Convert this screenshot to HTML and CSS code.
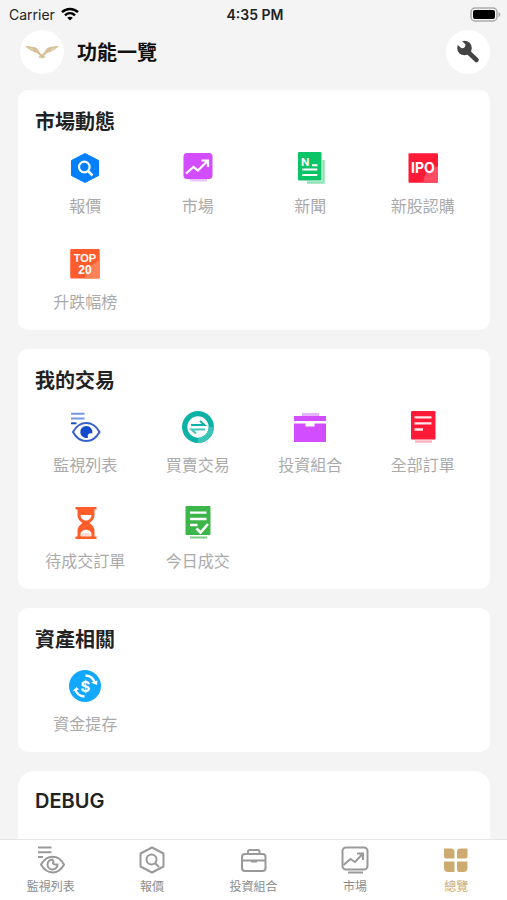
FILE: index.html
```
<!DOCTYPE html>
<html lang="zh-Hant">
<head>
    <meta charset="UTF-8">
    <meta name="viewport" content="width=device-width, initial-scale=1.0">
    <title>功能一覽</title>
    <link rel="stylesheet" href="styles.css">
</head>
<body>
    <div class="status-bar">
        <div class="carrier">
            <span>Carrier</span>
            <svg width="18" height="14" viewBox="0 0 18 14" fill="none" stroke="#000" stroke-width="2.5">
                <path d="M1 5.2C5.5 .8 12.5 .8 17 5.2M4 8.4c2.9-2.8 7.1-2.8 10 0"/>
                <path d="M9 13.6l-2.8-2.9c1.6-1.4 4-1.4 5.6 0z" fill="#000" stroke="none"/>
            </svg>
        </div>
        <div class="time">4:35 PM</div>
        <div class="battery">
            <svg width="31" height="15" viewBox="0 0 31 15">
                <rect x="1" y="1" width="26" height="13" rx="4" fill="#f4f4f4" stroke="#aaa" stroke-width="1.5"/>
                <rect x="3" y="3" width="22" height="9" rx="2"/>
                <path d="M28.5 5c2.4 1 2.4 4 0 5z" fill="#aaa"/>
            </svg>
        </div>
    </div>

    <header class="header">
        <div class="avatar">
            <svg width="34" height="14" viewBox="0 0 34 14">
                <path d="M.5.8c4.500 1.200 8.500.4 11 2.200 1.800 1.300 2.300 3.200 4 5.200L17 9.500l1.500-1.300c1.700-2 2.200-3.900 4-5.200 2.500-1.800 6.500-1 11-2.200-.8 1.800-2 2.700-3.500 3.200-.6 1.300-2 1.900-3.600 2.100-.8 1.200-2.400 1.700-4 1.700-.9 1.300-2 2-3.200 2.500l1.300 2.700-2-.5-1.500 1-1.500-1-2 .5 1.300-2.700c-1.200-.5-2.300-1.200-3.200-2.500-1.600 0-3.200-.5-4-1.700C6 5.900 4.600 5.300 4 4 2.500 3.500 1.300 2.600.5.800z" fill="#d6c096"/>
                <path d="M5 3.500l3 1M26 4.500l3-1" stroke="#fff" stroke-width=".5"/>
            </svg>
        </div>
        <h1>功能一覽</h1>
        <button type="button" class="settings" aria-label="設定">
            <svg width="24" height="24" viewBox="0 0 24 24">
                <path d="M10 10l10.500 10" stroke="#444" stroke-width="4.600" stroke-linecap="round"/>
                <circle cx="8.500" cy="8" r="7.300" fill="#444"/>
                <path d="M1.500-.5L4.500-.5 9.500 4.500C9.500 7 8 8.500 5.500 8.200L0 3.500z" fill="#fff"/>
            </svg>
        </button>
    </header>

    <main class="content">
        <section class="card">
            <h2>市場動態</h2>
            <div class="grid">
                <a href="#" class="item">
                    <svg viewBox="0 0 32 32" fill="none">
                        <path d="M16 1.500L29.500 8.500v15L16 30.500 2.500 23.500v-15z" fill="#0080ff" stroke="#0080ff" stroke-linejoin="round"/>
                        <circle cx="15.300" cy="15" r="5.300" stroke="#fff" stroke-width="2.200"/>
                        <path d="M19 19l4.500 4.500" stroke="#fff" stroke-width="2.500"/>
                    </svg>
                    <span>報價</span>
                </a>
                <a href="#" class="item">
                    <svg viewBox="0 0 32 32" fill="none">
                        <rect x="1.500" y="1" width="29" height="26" rx="3.500" fill="#d24dff"/>
                        <rect x="8" y="27" width="17" height="2.500" fill="#ebc4fb"/>
                        <path d="M4 21.500l7.500-6.500 4.300 3.500L25.500 9M19.500 8.500H26v6.500" stroke="#fff" stroke-width="2.200"/>
                    </svg>
                    <span>市場</span>
                </a>
                <a href="#" class="item">
                    <svg viewBox="0 0 32 32" fill="none">
                        <path d="M13 30.500h16.500V8" stroke="#8fe3b8" stroke-width="2.500"/>
                        <rect x="4" y="0" width="23.500" height="28.500" rx="1" fill="#0cc468"/>
                        <path d="M18 13.300h5.500M8.300 17.500h15M8.300 23h15" stroke="#fff" stroke-width="2"/>
                        <text x="7" y="14" class="glyph" font-size="11">N</text>
                    </svg>
                    <span>新聞</span>
                </a>
                <a href="#" class="item">
                    <svg viewBox="0 0 32 32">
                        <rect x="1.500" y="1.300" width="29.500" height="29.500" rx="1" fill="#ff1a38"/>
                        <path d="M31 14v16.800H16.500c0-10 6-13 14.500-16.800z" fill="#ff4b63"/>
                        <text x="16" y="21" class="glyph" font-size="14" text-anchor="middle">IPO</text>
                    </svg>
                    <span>新股認購</span>
                </a>
                <a href="#" class="item">
                    <svg viewBox="0 0 32 32">
                        <rect x="1.200" y="1" width="29.500" height="29.500" rx="1" fill="#ff5c2e"/>
                        <path d="M30.700 12v18.500H16c0-10 6-13 14.700-18.500z" fill="#ff8059"/>
                        <text x="16" y="14" class="glyph top20" font-size="11" text-anchor="middle">TOP</text>
                        <text x="16" y="26" class="glyph top20" font-size="12" text-anchor="middle">20</text>
                    </svg>
                    <span>升跌幅榜</span>
                </a>
            </div>
        </section>

        <section class="card">
            <h2>我的交易</h2>
            <div class="grid">
                <a href="#" class="item">
                    <svg viewBox="0 0 32 32" fill="none">
                        <path d="M2 2.700h13.500M2 7.500h13.500" stroke="#7895e2" stroke-width="2"/>
                        <path d="M2 12.300h5.500" stroke="#1d4fc8" stroke-width="2"/>
                        <path d="M4 21c6.500-12 20-12 26.500 0-6.500 12-20 12-26.500 0z" fill="#fff" stroke="#3a61c9" stroke-width="2"/>
                        <path d="M17.300 15a6 6 0 1 0 1.800 11.700c-1.200-3 .5-4.600 4.100-4.300A6 6 0 0 0 17.300 15z" fill="#124acb"/>
                    </svg>
                    <span>監視列表</span>
                </a>
                <a href="#" class="item">
                    <svg viewBox="0 0 32 32" fill="none">
                        <circle cx="16" cy="16" r="13.300" stroke="#0cb2a5" stroke-width="5.300"/>
                        <path d="M29.300 16A13.300 13.300 0 0 1 16 29.300" stroke="#3cc4b9" stroke-width="5.300"/>
                        <path d="M9 14h13.500l-4.500-4" stroke="#0cb2a5" stroke-width="2"/>
                        <path d="M23 18.500H9.500l4.500 4" stroke="#45c6bc" stroke-width="2"/>
                    </svg>
                    <span>買賣交易</span>
                </a>
                <a href="#" class="item">
                    <svg viewBox="0 0 32 32">
                        <path d="M8 2h17v3H8z" fill="#e6b2fb"/>
                        <path d="M0 5h32v5H0zM0 12.500h11.500V15.500H20.500V12.500H32V31H0z" fill="#d24dff"/>
                    </svg>
                    <span>投資組合</span>
                </a>
                <a href="#" class="item">
                    <svg viewBox="0 0 32 32" fill="none">
                        <rect x="4" y="0" width="24.500" height="28.500" rx="1" fill="#ff1a38"/>
                        <path d="M7.500 6.300h17M7.500 12.300h17M7.500 18.500h8.500" stroke="#ffe8eb" stroke-width="2.300"/>
                        <path d="M8 30.500h17" stroke="#ffb6c0" stroke-width="2.500"/>
                    </svg>
                    <span>全部訂單</span>
                </a>
                <a href="#" class="item">
                    <svg viewBox="0 0 32 32" fill="none">
                        <path d="M6.500 0h21v2.500h-2V8c0 4-2.500 6-5 8 2.500 2 5 4 5 8v5.500h2V32h-21v-2.500h2V24c0-4 2.500-6 5-8-2.500-2-5-4-5-8V2.500h-2z" fill="#ff5e2b"/>
                        <path d="M11.500 8h11c0 3-2.500 5.500-5.500 5.500S11.500 11 11.500 8zM11.500 29v-1.500c0-6.500 11-6.500 11 0V29z" fill="#fff"/>
                        <path d="M12 28c1-3 9-3 10 0v1.500H12z" fill="#ffdccf"/>
                    </svg>
                    <span>待成交訂單</span>
                </a>
                <a href="#" class="item">
                    <svg viewBox="0 0 32 32" fill="none">
                        <rect x="3.500" y="-1" width="25" height="29" rx="1" fill="#3cb54a"/>
                        <path d="M8 5.700h16.500M8 12h16.500M8 18h7.500" stroke="#fff" stroke-width="2.300"/>
                        <path d="M14.500 21.500l4 4 7.500-8.500" stroke="#fff" stroke-width="2.600"/>
                        <path d="M8 30.500h17" stroke="#7bcc84" stroke-width="2"/>
                    </svg>
                    <span>今日成交</span>
                </a>
            </div>
        </section>

        <section class="card">
            <h2>資產相關</h2>
            <div class="grid">
                <a href="#" class="item">
                    <svg viewBox="0 0 32 32" fill="none">
                        <circle cx="16" cy="16" r="16" fill="#12a8ff"/>
                        <path d="M16.500 5.500c5 .3 8 3 9.300 7.500M15.500 26.500c-5-.3-8-3-9.300-7.500" stroke="#fff" stroke-width="2.400"/>
                        <path d="M22 12.500l6.500-2-.5 4.500zM10 19.500l-6.500 2L7.500 17z" fill="#fff"/>
                        <text x="16.300" y="21.500" class="glyph" font-size="15" text-anchor="middle">$</text>
                    </svg>
                    <span>資金提存</span>
                </a>
            </div>
        </section>

        <section class="card card-debug">
            <h2>DEBUG</h2>
        </section>
    </main>

    <nav class="tab-bar">
        <a href="#" class="tab">
            <svg viewBox="0 0 28 28">
                <path d="M1 1.500h13.500M1 6.300h13.500M1 11h5"/>
                <path d="M4 18.500c6-10.500 17.500-10.500 23 0-5.500 10.500-17 10.500-23 0z"/>
                <path d="M15.500 13.500a5 5 0 1 0 5 5h-2.500c-2 0-2.500-1.500-1.500-2.500z"/>
            </svg>
            <span>監視列表</span>
        </a>
        <a href="#" class="tab">
            <svg viewBox="0 0 28 28">
                <path d="M14 1.500l11.500 6v13L14 26.500l-11.500-6v-13z" stroke-linejoin="round"/>
                <circle cx="13.500" cy="13.500" r="5"/>
                <path d="M17 17l4 4"/>
            </svg>
            <span>報價</span>
        </a>
        <a href="#" class="tab">
            <svg viewBox="0 0 28 28">
                <rect x="2" y="8" width="23.500" height="17" rx="3"/>
                <path d="M8 8V5.500c0-1 .5-1.500 1.500-1.500h8.500c1 0 1.500.5 1.500 1.500V8M2 14.500h23.500M11 15.500h6"/>
            </svg>
            <span>投資組合</span>
        </a>
        <a href="#" class="tab">
            <svg viewBox="0 0 28 28">
                <rect x="1.500" y="1.500" width="25" height="22" rx="3.500"/>
                <path d="M2.500 19l7-6 4.500 3 7.500-8M16 7.500h6V14M7 26.500h15"/>
            </svg>
            <span>市場</span>
        </a>
        <a href="#" class="tab active">
            <svg viewBox="0 0 28 28">
                <path d="M2 2.500h7c2.500 0 3.500 1.500 3.500 3.500v6.500H4.500c-1.500 0-2.500-.5-2.500-2.500zM25.500 2.500h-7c-2.500 0-3.500 1.500-3.500 3.500v6.500h8c1.500 0 2.500-.5 2.500-2.500zM2 15.500h10.500v10.500H6c-2.500 0-4-1.500-4-4zM15 15.500h10.500v6.500c0 2.500-1.500 4-4 4h-4c-1.500 0-2.500-.5-2.500-2.500z"/>
            </svg>
            <span>總覽</span>
        </a>
    </nav>
</body>
</html>
```
FILE: styles.css
```
* {
    box-sizing: border-box;
}
body {
    font-family: Inter, "Noto Sans CJK TC", sans-serif;
    display: flex;
    flex-direction: column;
    height: 100vh;
    margin: 0;
    background-color: #f4f4f4;
    color: #222;
}
a {
    text-decoration: none;
}
svg {
    display: block;
    overflow: visible;
}

/* status bar */
.status-bar {
    display: flex;
    align-items: center;
    height: 28px;
    flex-shrink: 0;
    padding: 0 6px 0 9px;
    font-size: 14px;
    color: #222;
}
.carrier,
.battery {
    flex: 1;
    display: flex;
    align-items: center;
    gap: 6px;
}
.battery {
    justify-content: flex-end;
}
.time {
    font-weight: 600;
}

/* header */
.header {
    display: flex;
    align-items: center;
    flex-shrink: 0;
    padding: 2px 17px 16px 20px;
}
.header h1 {
    flex: 1;
    margin: 0 0 0 13px;
    padding-top: 2px;
    font-size: 20px;
    line-height: 30px;
    color: #111;
}
.avatar,
.settings {
    display: flex;
    align-items: center;
    justify-content: center;
    width: 44px;
    height: 44px;
    padding: 0;
    border: none;
    border-radius: 50%;
    background-color: #fff;
}
.settings {
    cursor: pointer;
}

/* cards */
.content {
    display: flex;
    flex-direction: column;
    flex: 1;
    min-height: 0;
    gap: 19px;
    padding: 0 17px 0 18px;
    overflow-y: auto;
    scrollbar-width: none;
}
.card {
    flex-shrink: 0;
    padding: 17px 11px 16px;
    border-radius: 10px;
    background-color: #fff;
}
.card-debug {
    min-height: 144px;
    border-radius: 16px;
}
.card h2 {
    margin: 0 6px 15px;
    font-size: 20px;
    line-height: 30px;
}
.card-debug h2 {
    font-weight: 600;
    line-height: 26px;
}
.grid {
    display: grid;
    grid-template-columns: repeat(4, 1fr);
    row-gap: 30px;
}
.item {
    display: flex;
    flex-direction: column;
    align-items: center;
    gap: 10px;
    font-size: 16px;
    line-height: 24px;
    white-space: nowrap;
    color: #aaa;
}
.item svg {
    width: 32px;
    height: 32px;
}
.glyph {
    fill: #fff;
    font-weight: 700;
}
.top20 {
    font-family: "Liberation Sans", sans-serif;
}

/* bottom tabs */
.tab-bar {
    display: flex;
    flex-shrink: 0;
    height: 61px;
    padding-top: 6px;
    border-top: 1px solid #e6e6e6;
    background-color: #fff;
}
.tab {
    display: flex;
    flex: 1;
    flex-direction: column;
    align-items: center;
    gap: 5px;
    font-size: 12px;
    line-height: 16px;
    color: #8c8c8c;
}
.tab svg {
    width: 28px;
    height: 28px;
    fill: none;
    stroke: #999;
    stroke-width: 2;
}
.tab.active {
    color: #cdab70;
}
.tab.active svg {
    fill: #cdab70;
    stroke: none;
}
```
